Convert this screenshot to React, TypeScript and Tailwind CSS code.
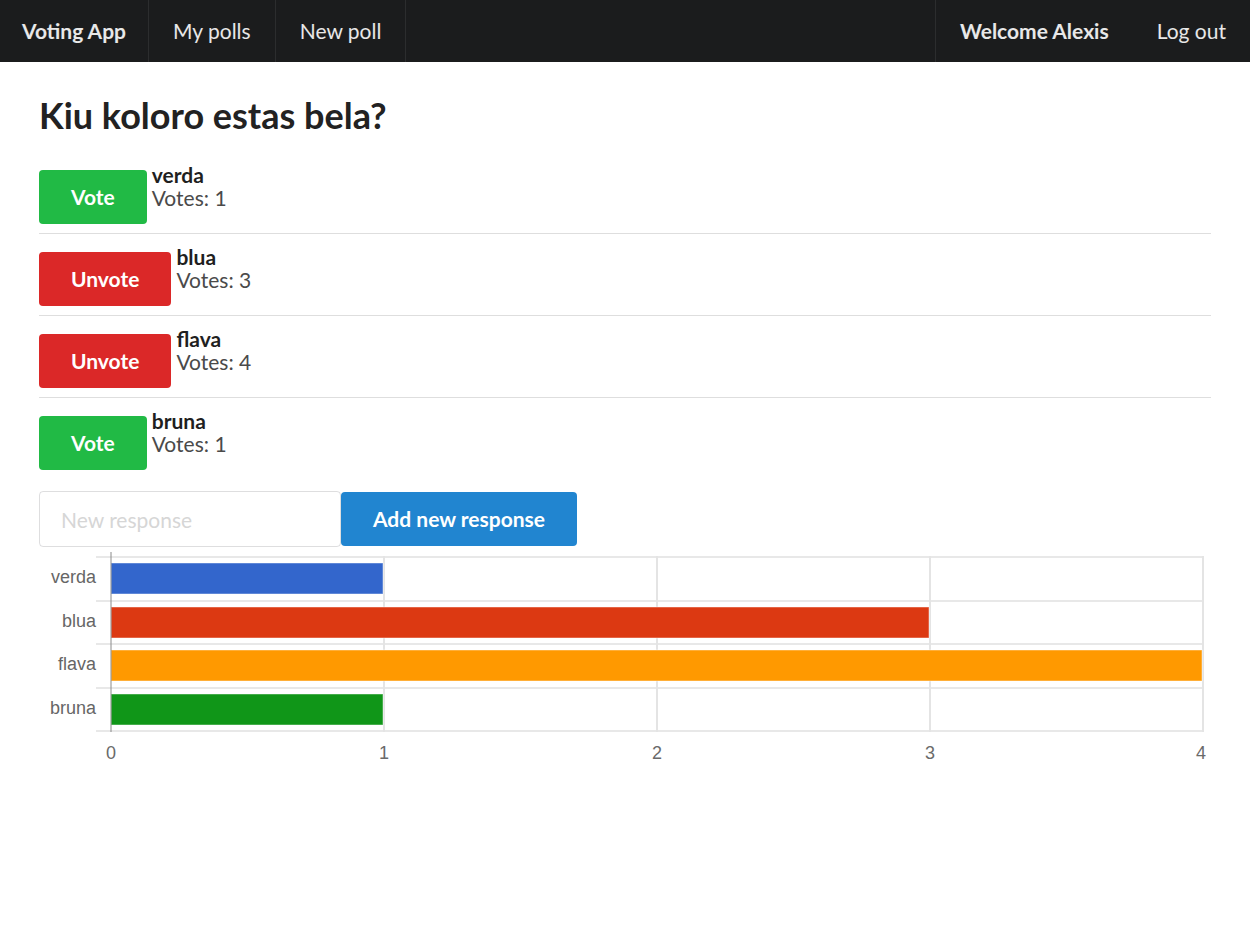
import React from "react";

const answers = [
  { name: "verda", votes: 1, voted: false, color: "#3366cc" },
  { name: "blua", votes: 3, voted: true, color: "#dc3912" },
  { name: "flava", votes: 4, voted: true, color: "#ff9900" },
  { name: "bruna", votes: 1, voted: false, color: "#109618" },
];

const font = { fontFamily: "Lato, 'Helvetica Neue', Arial, sans-serif" };

function NavItem({ children, bold, divider = true, first }: { children: React.ReactNode; bold?: boolean; divider?: boolean; first?: boolean }) {
  return (
    <a
      className={
        "flex items-center text-[21px] text-white/90 " +
        (first ? "px-[22px] " : "px-6 ") +
        (bold ? "font-bold " : "") +
        (divider ? "border-r border-white/[0.08]" : "")
      }
    >
      {children}
    </a>
  );
}

function Chart() {
  // chart area in svg coords; svg sits at page x=39, y=550
  const left = 72;
  const right = 1164;
  const unit = (right - left) / 4;
  const rows = [7, 51, 94, 138, 181];
  const label = "'Liberation Sans', Arial, sans-serif";
  return (
    <svg width="1172" height="220" viewBox="0 0 1172 220" className="block">
      {rows.map((y) => (
        <line key={y} x1={57} x2={right} y1={y} y2={y} stroke="#e8e8e8" strokeWidth="2" />
      ))}
      {[1, 2, 3, 4].map((i) => (
        <line key={i} x1={left + unit * i} x2={left + unit * i} y1={6} y2={182} stroke="#e4e4e4" strokeWidth="2" />
      ))}
      {answers.map((a, i) => (
        <g key={a.name}>
          <rect
            x={left}
            y={rows[i] + 6}
            width={unit * a.votes - 1}
            height={31}
            fill={a.color}
            stroke="#ffffff"
            strokeOpacity="0.45"
            strokeWidth="1"
          />
          <text x={57} y={rows[i] + 26} textAnchor="end" fontSize="18" fill="#666666" fontFamily={label}>
            {a.name}
          </text>
        </g>
      ))}
      <line x1={left} x2={left} y1={2} y2={182} stroke="#8a8a8a" strokeWidth="1" />
      {[0, 1, 2, 3, 4].map((i) => (
        <text
          key={i}
          x={i === 4 ? left + unit * i - 2 : left + unit * i}
          y={209}
          textAnchor="middle"
          fontSize="18"
          fill="#6a6a6a"
          fontFamily={label}
        >
          {i}
        </text>
      ))}
    </svg>
  );
}

export default function App() {
  return (
    <div className="min-h-screen bg-white" style={font}>
      <nav className="flex h-[62px] bg-[#1b1c1d]">
        <NavItem bold first>Voting App</NavItem>
        <NavItem>My polls</NavItem>
        <NavItem>New poll</NavItem>
        <div className="ml-auto flex border-l border-white/[0.08]">
          <NavItem bold divider={false}>Welcome Alexis</NavItem>
          <NavItem divider={false}>Log out</NavItem>
        </div>
      </nav>

      <main className="px-[39px]">
        <h1 className="mt-[33px] mb-[17px] text-[36px] font-bold leading-[40px] text-[#222]">Kiu koloro estas bela?</h1>

        <div>
          {answers.map((a, i) => (
            <div
              key={a.name}
              className={
                "flex items-end gap-[5px] pt-[11px] pb-[9px] " +
                (i < answers.length - 1 ? "border-b border-[#dedede]" : "")
              }
            >
              <button
                className={
                  "h-[54px] rounded-[4px] px-[32px] text-[21px] font-bold leading-6 text-white " +
                  (a.voted ? "bg-[#db2828]" : "bg-[#21ba45]")
                }
              >
                {a.voted ? "Unvote" : "Vote"}
              </button>
              <div className="mb-[15px] text-[21px] leading-[23px]">
                <div className="font-bold text-[#1f1f1f]">{a.name}</div>
                <div className="text-[#4a4a4a]">Votes: {a.votes}</div>
              </div>
            </div>
          ))}
        </div>

        <div className="mt-[12px] flex items-center">
          <input
            placeholder="New response"
            className="h-[56px] w-[302px] rounded-[4px] border border-[#22242626] px-[21px] text-[21px] text-[#222] outline-none placeholder:text-[#d6d6d6]"
          />
          <button className="h-[54px] rounded-[4px] bg-[#2185d0] px-[32px] text-[21px] font-bold text-white">
            Add new response
          </button>
        </div>

        <div className="mt-[3px]">
          <Chart />
        </div>
      </main>
    </div>
  );
}
